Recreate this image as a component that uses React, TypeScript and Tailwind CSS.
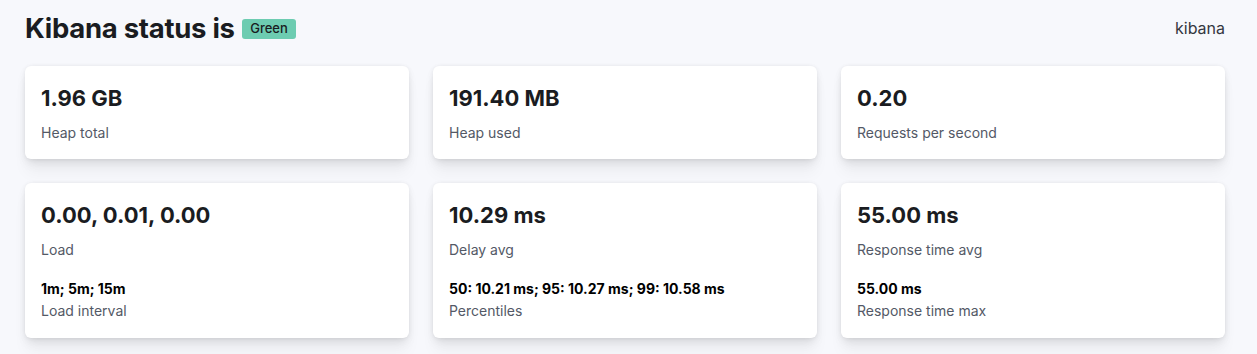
import React from "react";

type Stat = { value: string; label: string; subValue?: string; subLabel?: string };

const row1: Stat[] = [
  { value: "1.96 GB", label: "Heap total" },
  { value: "191.40 MB", label: "Heap used" },
  { value: "0.20", label: "Requests per second" },
];

const row2: Stat[] = [
  { value: "0.00, 0.01, 0.00", label: "Load", subValue: "1m; 5m; 15m", subLabel: "Load interval" },
  { value: "10.29 ms", label: "Delay avg", subValue: "50: 10.21 ms; 95: 10.27 ms; 99: 10.58 ms", subLabel: "Percentiles" },
  { value: "55.00 ms", label: "Response time avg", subValue: "55.00 ms", subLabel: "Response time max" },
];

function Card({ s }: { s: Stat }) {
  return (
    <div className="bg-white rounded-md p-4 shadow-[0_0.9px_4px_-1px_rgba(0,0,0,0.08),0_2.6px_8px_-1px_rgba(0,0,0,0.06),0_5.7px_12px_-1px_rgba(0,0,0,0.05),0_15px_15px_-1px_rgba(0,0,0,0.04)]">
      <div className="text-[22px] leading-[32px] font-bold text-[#1a1c21]">{s.value}</div>
      <div className="mt-[9px] text-[14px] leading-[20px] text-[#535966]">{s.label}</div>
      {s.subValue && (
        <div className="mt-[18px]">
          <div className="text-[14px] leading-[22px] font-bold text-black">{s.subValue}</div>
          <div className="text-[14px] leading-[22px] text-[#535966]">{s.subLabel}</div>
        </div>
      )}
    </div>
  );
}

export default function App() {
  return (
    <div
      className="min-h-[354px] bg-[#f7f8fc] pl-[25px] pr-[32px] pt-[12px]"
      style={{ fontFamily: "Inter, 'Noto Sans', sans-serif" }}
    >
      <div className="flex items-center justify-between h-[32px]">
        <div className="flex items-center gap-[7px]">
          <h1 className="text-[27.5px] leading-[32px] font-bold text-[#1a1c21] tracking-[-0.01em]">Kibana status is</h1>
          <span className="bg-[#6dccb1] rounded-[3px] px-[8.5px] h-[20px] flex items-center text-[13px] font-medium text-[#1a1c21] mt-[2px]">
            Green
          </span>
        </div>
        <div className="text-[16px] text-[#343741]">kibana</div>
      </div>
      <div className="mt-[22px] grid grid-cols-3 gap-[24px]">
        {row1.map((s) => (
          <Card key={s.label} s={s} />
        ))}
      </div>
      <div className="mt-[24px] grid grid-cols-3 gap-[24px]">
        {row2.map((s) => (
          <Card key={s.label} s={s} />
        ))}
      </div>
    </div>
  );
}
